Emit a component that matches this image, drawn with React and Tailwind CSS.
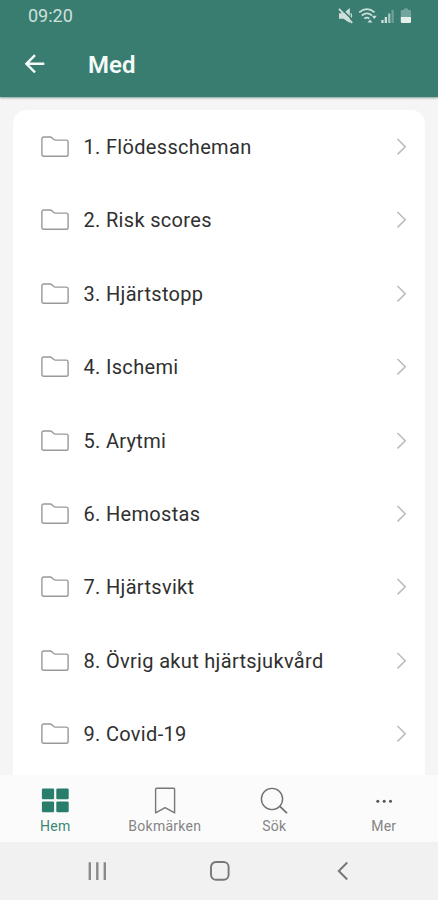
const folders = [
    "1. Flödesscheman",
    "2. Risk scores",
    "3. Hjärtstopp",
    "4. Ischemi",
    "5. Arytmi",
    "6. Hemostas",
    "7. Hjärtsvikt",
    "8. Övrig akut hjärtsjukvård",
    "9. Covid-19",
];

const FolderIcon = () => (
    <svg width="28" height="22" viewBox="0 0 28 22" fill="none" stroke="#999" strokeWidth="1.4" strokeLinejoin="round">
        <path d="M0.9 3Q0.9 1 2.9 1H9.2Q10.2 1 10.9 1.7L12.7 3.5Q13.4 4.1 14.5 4.1H25.3Q27.1 4.1 27.1 5.9V18.5Q27.1 20.3 25.3 20.3H2.7Q0.9 20.3 0.9 18.5Z" />
    </svg>
);

const ChevronIcon = () => (
    <svg width="12" height="18" viewBox="0 0 12 18" fill="none" stroke="#bdbdbd" strokeWidth="1.6">
        <path d="M2.5 1L10.2 8.7L2.5 16.4" />
    </svg>
);

const HomeIcon = () => (
    <svg width="28" height="26" viewBox="0 0 28 26" fill="#287e6a">
        <rect x="0.9" y="1.5" width="12.2" height="10.8" rx="1.2" />
        <rect x="15.3" y="1.5" width="12.4" height="10.8" rx="1.2" />
        <rect x="0.9" y="14.4" width="12.2" height="10.8" rx="1.2" />
        <rect x="15.3" y="14.4" width="12.4" height="10.8" rx="1.2" />
    </svg>
);

const BookmarkIcon = () => (
    <svg width="22" height="28" viewBox="0 0 22 28" fill="none" stroke="#777" strokeWidth="1.4" strokeLinejoin="round">
        <path d="M2.8 2.2H19.7Q20.6 2.2 20.6 3.1V26.9L11.1 21.6L1.6 26.9V3.4Q1.6 2.2 2.8 2.2Z" />
    </svg>
);

const SearchIcon = () => (
    <svg width="28" height="28" viewBox="0 0 28 28" fill="none" stroke="#707070" strokeWidth="1.4">
        <circle cx="12" cy="13" r="10.6" />
        <path d="M19.6 20.2L27 27.2" strokeWidth="1.8" />
    </svg>
);

const MoreIcon = () => (
    <svg width="18" height="6" viewBox="0 0 18 6" fill="#555">
        <circle cx="2.8" cy="4.2" r="1.5" />
        <circle cx="9.2" cy="4.2" r="1.5" />
        <circle cx="15.5" cy="4.2" r="1.5" />
    </svg>
);

const StatusIcons = () => (
    <svg width="76" height="20" viewBox="0 0 76 20" fill="#cfe0dc">
        {/* muted speaker */}
        <path d="M1 7.3H5.5L11.8 2V17L5.5 12.8H1Z" />
        <path d="M12.9 7.2Q14.2 9.5 12.9 11.8" fill="none" stroke="#cfe0dc" strokeWidth="1.3" />
        <path d="M2.3 1.9L15.5 14.8" stroke="#387d70" strokeWidth="1.6" />
        <path d="M1 2.8L14.2 16.8" stroke="#cfe0dc" strokeWidth="1.8" />
        {/* wifi */}
        <g fill="none" stroke="#cfe0dc" strokeWidth="1.7">
            <path d="M21.2 6.3Q29 0 36.6 6.3" />
            <path d="M23.8 9.5Q29 5.4 34 9.5" />
            <path d="M26.3 12.7Q29 10.6 31.3 12.7" />
        </g>
        <path d="M29.6 16.6L32 13.4L34.4 16.6Z M33.8 9.8H38.8L36.3 13Z" />
        {/* signal */}
        <path d="M43.3 14H45.6V17H43.3Z M46.7 11H49V17H46.7Z" />
        <path d="M50.1 7.5H52.4V17H50.1Z" opacity="0.75" />
        <path d="M53.5 4H55.8V17H53.5Z" opacity="0.35" />
        {/* battery */}
        <path d="M65.9 2.5H70.1V4H71.7Q73 4 73 5.3V11H62.8V5.3Q62.8 4 64.1 4H65.9Z" opacity="0.4" />
        <path d="M62.8 11H73V15.8Q73 17 71.7 17H64.1Q62.8 17 62.8 15.8Z" fill="#e5f0ed" />
    </svg>
);

const tabs = [
    { label: "Hem", icon: <HomeIcon />, active: true },
    { label: "Bokmärken", icon: <BookmarkIcon /> },
    { label: "Sök", icon: <SearchIcon /> },
    { label: "Mer", icon: <MoreIcon /> },
];

const App = () => {
    return (
        <div className="flex h-[900px] w-[438px] flex-col overflow-hidden bg-[#f5f5f5] font-['Roboto',sans-serif]">
            <header className="z-10 h-[97px] shrink-0 bg-[#387d70] shadow-[0_1px_2px_rgba(40,90,80,0.55)]">
                <div className="flex h-8 items-center justify-between pr-[24px] pl-7">
                    <span className="text-[18px] leading-8 text-[#cfe0dc]">09:20</span>
                    <StatusIcons />
                </div>
                <div className="flex h-[64px] items-center pl-6">
                    <button aria-label="Tillbaka">
                        <svg width="22" height="20" viewBox="0 0 22 20" fill="none" stroke="#f3faf8" strokeWidth="2.4">
                            <path d="M20.3 9.8H2.5M11 1.2L2.4 9.8L11 18.4" />
                        </svg>
                    </button>
                    <h1 className="ml-[42px] pt-px text-[24px] font-semibold text-[#f3faf8]">Med</h1>
                </div>
            </header>

            <main className="flex-1 px-[13px] pt-[13px]">
                <ul className="h-[665px] rounded-t-[14px] bg-white pt-[0.3px]">
                    {folders.map((name) => (
                        <li key={name} className="flex h-[73.4px] items-center pr-[18px] pl-[28px]">
                            <FolderIcon />
                            <span className="ml-[14.5px] flex-1 text-[20px] tracking-[0.32px] text-[#303030]">{name}</span>
                            <ChevronIcon />
                        </li>
                    ))}
                </ul>
            </main>

            {/* Bottom tabs */}
            <nav className="grid h-[67px] shrink-0 grid-cols-4 bg-[#fbfbfb]">
                {tabs.map((tab) => (
                    <div key={tab.label} className="flex flex-col items-center pt-[11px] pl-px">
                        <div className="flex h-7 items-center">{tab.icon}</div>
                        <span
                            className={
                                tab.active
                                    ? "mt-[2px] text-[14px] leading-5 tracking-[0.25px] text-[#3b8875]"
                                    : "mt-[2px] text-[14px] leading-5 tracking-[0.25px] text-[#858585]"
                            }
                        >
                            {tab.label}
                        </span>
                    </div>
                ))}
            </nav>

            {/* Android navigation bar */}
            <div className="flex h-[58px] shrink-0 items-center bg-[#f1f1f1] pb-px pl-[87px]">
                <svg width="20" height="20" viewBox="0 0 20 20" stroke="#8a8a8a" strokeWidth="2.4">
                    <path d="M2.8 1.3V19M10.3 1.3V19M17.8 1.3V19" />
                </svg>
                <svg className="ml-[102px]" width="22" height="22" viewBox="0 0 22 22" fill="none" stroke="#777" strokeWidth="1.9">
                    <rect x="2" y="2" width="17.6" height="17.8" rx="5" />
                </svg>
                <svg className="ml-[106px]" width="12" height="20" viewBox="0 0 12 20" fill="none" stroke="#777" strokeWidth="2">
                    <path d="M10.2 1.5L1.8 10L10.2 18.5" />
                </svg>
            </div>
        </div>
    );
};

export default App;
